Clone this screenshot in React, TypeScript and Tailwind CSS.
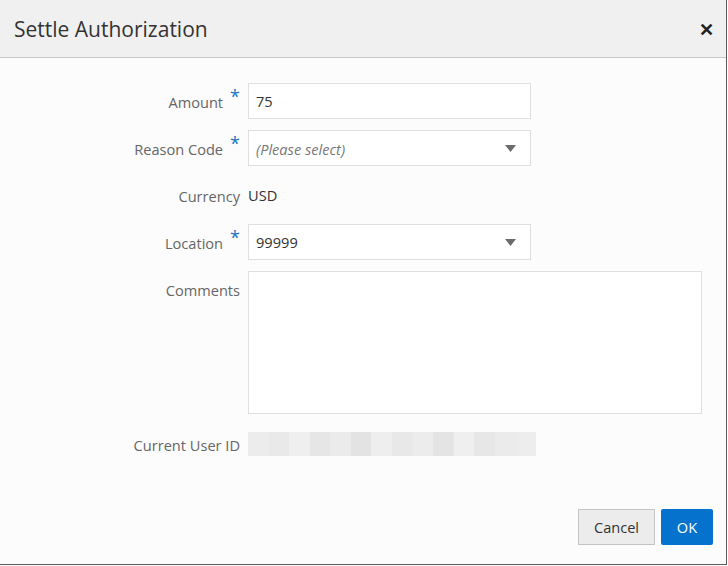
import React from "react";

function Caret() {
  return (
    <svg width="11" height="7" viewBox="0 0 11 7" className="mr-[14px]">
      <path d="M0 0 H11 L5.5 7 Z" fill="#6b6b6b" />
    </svg>
  );
}

function Label({ text, required }: { text: string; required?: boolean }) {
  return (
    <div className="flex w-[240px] shrink-0 justify-end pt-[3px] text-[#666]">
      <span>{text}</span>
      {required ? (
        <span className="ml-[7px] -mt-[5px] text-[18px] leading-none text-[#1a73c4]">*</span>
      ) : (
        <span className="w-0" />
      )}
    </div>
  );
}

const blur = ["#ececec", "#e9e9e9", "#efefef", "#e6e6e6", "#ebebeb", "#e3e3e3", "#eeeeee", "#e8e8e8", "#ececec", "#e4e4e4", "#efefef", "#e7e7e7", "#ebebeb", "#ededed"];

export default function App() {
  return (
    <div
      className="h-[566px] w-[728px] bg-white text-[14.6px] text-[#333]"
      style={{ fontFamily: '"Segoe UI", "Open Sans", "Noto Sans", sans-serif' }}
    >
      <div className="flex h-[565px] w-[727px] flex-col border-r border-b border-[#5c5c5c] bg-[#fcfcfc]">
        <header className="flex h-[58px] items-center justify-between border-b border-[#c8c8c8] bg-[#f0f0f0] pl-[14px] pr-[12px] pt-[2px]">
          <h1 className="text-[21px] text-[#333]">Settle Authorization</h1>
          <span className="text-[18px] font-bold text-[#222]">✕</span>
        </header>

        <div className="flex flex-1 flex-col gap-[11px] pt-[25px]">
          <div className="flex h-9 items-center">
            <Label text="Amount" required />
            <div className="ml-2 flex h-9 w-[283px] items-center border border-[#dfdfdf] bg-white px-[7px] pt-[1px]">75</div>
          </div>
          <div className="flex h-9 items-center">
            <Label text="Reason Code" required />
            <div className="ml-2 flex h-9 w-[283px] items-center justify-between border border-[#dfdfdf] bg-white pl-[7px]">
              <span className="pt-[3px] italic text-[#777]">(Please select)</span>
              <Caret />
            </div>
          </div>
          <div className="flex h-9 items-center">
            <Label text="Currency" />
            <div className="ml-2 pt-[2px]">USD</div>
          </div>
          <div className="flex h-9 items-center">
            <Label text="Location" required />
            <div className="ml-2 flex h-9 w-[283px] items-center justify-between border border-[#dfdfdf] bg-white pl-[7px]">
              <span className="pt-[2px]">99999</span>
              <Caret />
            </div>
          </div>
          <div className="flex">
            <div className="pt-[6px]">
              <Label text="Comments" />
            </div>
            <div className="ml-2 h-[143px] w-[454px] border border-[#dfdfdf] bg-white" />
          </div>
          <div className="mt-[7px] flex h-6 items-center">
            <Label text="Current User ID" />
            <div className="ml-2 flex h-6 w-[288px]">
              {blur.map((c, i) => (
                <div key={i} className="flex-1" style={{ background: c }} />
              ))}
            </div>
          </div>
        </div>

        <footer className="flex justify-end gap-[6px] pb-[19px] pr-[13px]">
          <button className="h-9 w-[77px] border border-[#c4c4c4] bg-[#ececec] pt-[2px] text-[#333]">Cancel</button>
          <button className="h-9 w-[52px] rounded-[2px] bg-[#0572ce] pt-[2px] text-white">OK</button>
        </footer>
      </div>
    </div>
  );
}
